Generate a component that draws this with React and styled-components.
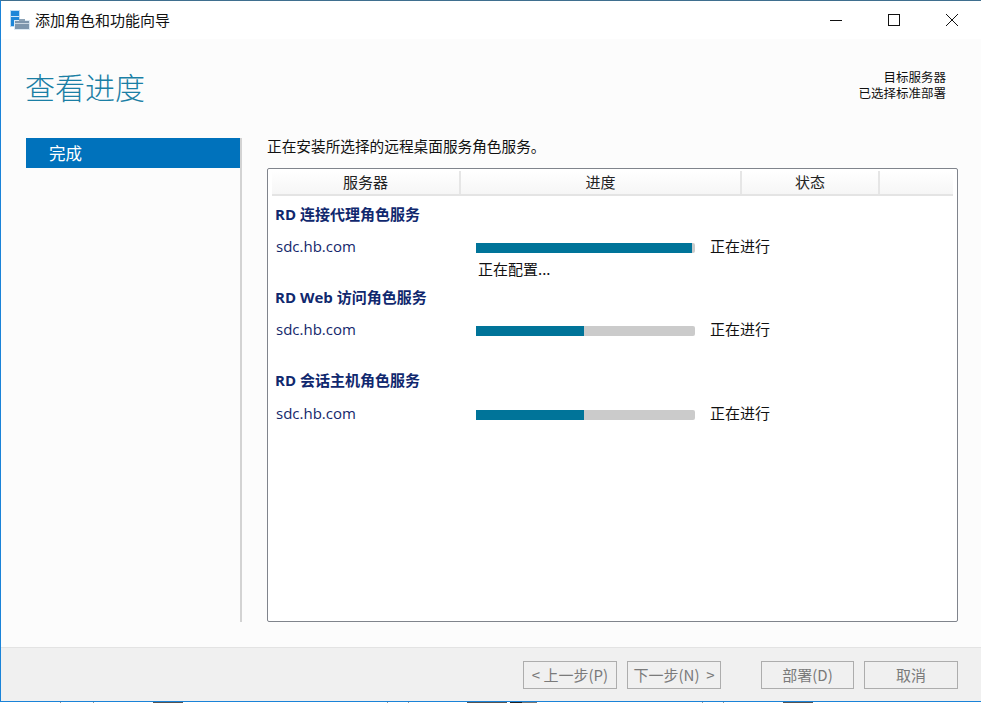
import React from 'react';
import styled, { createGlobalStyle } from 'styled-components';

const CJK = '"Noto Sans CJK SC", "Liberation Sans", sans-serif';
const LATIN = '"Open Sans", "Noto Sans CJK SC", sans-serif';

const Global = createGlobalStyle`
  html, body { margin: 0; padding: 0; background: #fff; overflow: hidden; }
  * { box-sizing: border-box; }
`;

const Win = styled.div`
  width: 981px; height: 702px; display: flex; flex-direction: column;
  border-left: 1px solid #1a83d8; border-top: 1px solid #3f6f8f; border-bottom: 1px solid #1a83d8;
  font-family: ${CJK}; color: #111; font-size: 15px; background: #fcfcfc;
`;
const TitleBar = styled.div`
  height: 38px; flex: none; background: #fff; display: flex; align-items: center;
  padding-left: 9px;
`;
const TitleText = styled.span`
  margin-left: 5px; font-size: 15px; color: #111; line-height: 20px;
`;
const WinButtons = styled.div`
  margin-left: auto; display: flex; height: 100%; align-items: center;
`;
const WinButton = styled.div`
  width: 58px; height: 100%; display: flex; align-items: center; justify-content: center;
`;
const Main = styled.div`
  height: 608px; flex: none; display: flex; flex-direction: column; padding: 0 23px 25px 25px;
`;
const Header = styled.div`
  height: 99px; flex: none; display: flex; justify-content: space-between;
`;
const PageTitle = styled.h1`
  margin: 25px 0 0 -1px; font-size: 30px; font-weight: 300; color: #1a7fa5; line-height: 44px; letter-spacing: 0;
`;
const Target = styled.div`
  margin-top: 30px; margin-right: 12px; text-align: right; font-size: 12.5px; line-height: 16px; color: #111;
`;
const Body = styled.div`
  height: 484px; flex: none; display: flex;
`;
const Nav = styled.div`
  width: 216px; flex: none; border-right: 2px solid #d3d3d3;
`;
const NavItem = styled.div`
  width: 214px; height: 30px; background: #0072bc; color: #fff; font-size: 16.5px; line-height: 30px; padding-left: 23px;
`;
const Content = styled.div`
  flex: 1; min-width: 0; padding-left: 25px; display: flex; flex-direction: column;
`;
const Intro = styled.div`
  height: 30px; line-height: 16px; font-size: 14.67px; color: #111;
`;
const Panel = styled.div`
  height: 454px; background: #fff; border: 1px solid #80848c; border-radius: 2px; padding: 2px 4px 0 4px;
`;
const HeaderRow = styled.div`
  height: 25px; display: flex; border-bottom: 2px solid #e4e4e4;
  background: linear-gradient(#fff, #f6f6f6);
`;
const Col = styled.div`
  width: ${p => p.$w}px; flex: none; text-align: center; font-size: 15px; line-height: 22px; color: #222;
  border-right: ${p => (p.$last ? 'none' : '2px solid #e6e6e6')};
`;
const Group = styled.section`
  height: 83px; display: flex; flex-direction: column;
`;
const GroupTitle = styled.div`
  margin: 8px 0 0 3px; font-family: ${LATIN}; font-weight: 700; font-size: 15px; line-height: 20px; color: #10286e;
`;
const Row = styled.div`
  margin-top: ${p => p.$top}px; display: flex; align-items: center; height: 20px;
`;
const Server = styled.div`
  width: 204px; flex: none; padding-left: 4px; font-family: ${LATIN}; font-size: 15px; color: #14276b; line-height: 20px;
`;
const Track = styled.div`
  width: 219px; height: 10px; flex: none; background: #cbcbcb; margin-top: 4px; border-radius: 0 2px 2px 0;
`;
const Fill = styled.div`
  height: 100%; background: #007499;
`;
const Status = styled.div`
  margin-left: 15px; margin-top: -1px; font-size: 15px; line-height: 20px; color: #111;
`;
const Note = styled.div`
  margin: 3px 0 0 206px; font-size: 15px; line-height: 20px; color: #111;
`;
const Footer = styled.div`
  flex: 1; background: #f0f0f0; border-top: 1px solid #e3e3e3;
  display: flex; align-items: flex-start; padding: 13px 23px 0 0; justify-content: flex-end;
`;
const Btn = styled.div`
  width: ${p => p.$w}px; height: 28px; margin-left: ${p => p.$gap || 0}px; flex: none;
  border: 1px solid #adadad; background: #f0f0f0; color: #7a7a7a; font-size: 15px;
  display: flex; align-items: center; justify-content: center; white-space: pre; line-height: 26px;
`;
const Strip = styled.svg`
  display: block; width: 981px; height: 1px;
`;

const AppIcon = () => (
  <svg width="20" height="20" viewBox="0 0 20 20">
    <rect x="0" y="0" width="10" height="17" fill="#bcdcf4" />
    <rect x="1" y="1" width="8" height="15" fill="#1c86d8" />
    <rect x="1" y="6" width="8" height="1" fill="#cfe6f8" />
    <rect x="4" y="10" width="16" height="10" fill="#dbe9f4" />
    <rect x="5" y="11" width="14" height="8" fill="#7d96ad" />
    <rect x="5" y="13" width="14" height="1" fill="#c9d6e1" />
    <rect x="9" y="9" width="6" height="2" fill="#8ba2b6" />
  </svg>
);

const Rows = [
  { title: 'RD 连接代理角色服务', pct: 98.6, top: 12, note: '正在配置...' },
  { title: 'RD Web 访问角色服务', pct: 49.3, top: 12 },
  { title: 'RD 会话主机角色服务', pct: 49.3, top: 13 },
];

const Marks = [
  [60, 1, '#999'], [93, 1, '#999'], [153, 30, '#555'], [387, 1, '#999'], [408, 1, '#999'],
  [467, 40, '#555'], [510, 12, '#222'], [522, 15, '#777'], [702, 1, '#999'], [723, 1, '#999'], [783, 30, '#555'],
];

export default function App() {
  return (
    <>
      <Global />
      <Win>
        <TitleBar>
          <AppIcon />
          <TitleText>添加角色和功能向导</TitleText>
          <WinButtons>
            <WinButton>
              <svg width="12" height="12" viewBox="0 0 12 12"><path d="M0 6.5H12" stroke="#111" /></svg>
            </WinButton>
            <WinButton>
              <svg width="12" height="12" viewBox="0 0 12 12"><rect x=".5" y=".5" width="11" height="11" fill="none" stroke="#111" /></svg>
            </WinButton>
            <WinButton>
              <svg width="12" height="12" viewBox="0 0 12 12"><path d="M0 0L12 12M12 0L0 12" stroke="#111" /></svg>
            </WinButton>
          </WinButtons>
        </TitleBar>
        <Main>
          <Header>
            <PageTitle>查看进度</PageTitle>
            <Target>目标服务器<br />已选择标准部署</Target>
          </Header>
          <Body>
            <Nav><NavItem>完成</NavItem></Nav>
            <Content>
              <Intro>正在安装所选择的远程桌面服务角色服务。</Intro>
              <Panel>
                <HeaderRow>
                  <Col $w={189}>服务器</Col>
                  <Col $w={281}>进度</Col>
                  <Col $w={138}>状态</Col>
                  <Col $w={73} $last />
                </HeaderRow>
                {Rows.map(r => (
                  <Group key={r.title}>
                    <GroupTitle>{r.title}</GroupTitle>
                    <Row $top={r.top}>
                      <Server>sdc.hb.com</Server>
                      <Track><Fill style={{ width: `${r.pct}%` }} /></Track>
                      <Status>正在进行</Status>
                    </Row>
                    {r.note && <Note>{r.note}</Note>}
                  </Group>
                ))}
              </Panel>
            </Content>
          </Body>
        </Main>
        <Footer>
          <Btn $w={94}>{'< 上一步(P)'}</Btn>
          <Btn $w={94} $gap={10}>{'下一步(N)  >'}</Btn>
          <Btn $w={93} $gap={40}>部署(D)</Btn>
          <Btn $w={94} $gap={10}>取消</Btn>
        </Footer>
      </Win>
      <Strip viewBox="0 0 981 1">
        {Marks.map(([x, w, c]) => <rect key={x} x={x} y="0" width={w} height="1" fill={c} />)}
      </Strip>
    </>
  );
}
